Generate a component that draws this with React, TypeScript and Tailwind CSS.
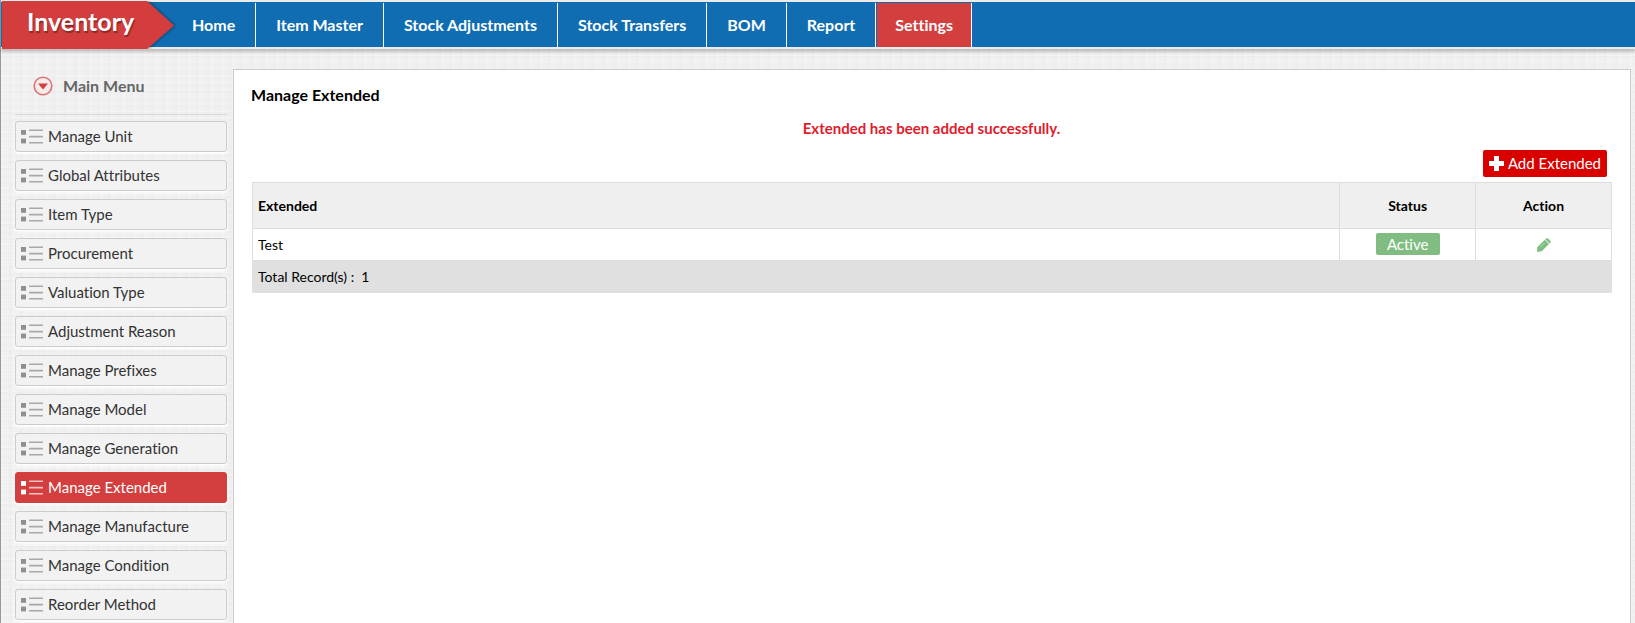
import React from "react";

const navItems = ["Home", "Item Master", "Stock Adjustments", "Stock Transfers", "BOM", "Report", "Settings"];

const menuItems = [
  "Manage Unit",
  "Global Attributes",
  "Item Type",
  "Procurement",
  "Valuation Type",
  "Adjustment Reason",
  "Manage Prefixes",
  "Manage Model",
  "Manage Generation",
  "Manage Extended",
  "Manage Manufacture",
  "Manage Condition",
  "Reorder Method",
];

function ListIcon({ active }: { active: boolean }) {
  return (
    <svg width="22" height="15" viewBox="0 0 22 15" className="shrink-0" aria-hidden="true">
      <g fill={active ? "#ffffff" : "#8f8f8f"}>
        <rect x="0" y="1" width="5" height="4.8" />
        <rect x="0" y="9.6" width="5" height="4.8" />
      </g>
      <g fill={active ? "#f3c4c4" : "#a8a8a8"}>
        <rect x="8" y="0.5" width="14" height="1.6" rx="0.5" />
        <rect x="8" y="6.8" width="14" height="1.6" rx="0.5" />
        <rect x="8" y="13" width="14" height="1.6" rx="0.5" />
      </g>
    </svg>
  );
}

function Header() {
  return (
    <header className="relative flex h-[49px] items-stretch border-t-2 border-b-2 border-[#ececec] bg-[#106db2] shadow-[0_3px_3px_rgba(0,0,0,0.2)]">
      <div className="absolute -top-px left-px">
        <svg width="184" height="48" viewBox="0 0 184 48" className="block" aria-hidden="true">
          <defs>
            <filter id="arrow-shadow" x="-10%" y="-10%" width="125%" height="125%">
              <feDropShadow dx="1" dy="0" stdDeviation="1.5" floodOpacity="0.5" />
            </filter>
          </defs>
          <path d="M0 0H145L172 24.500L145 48H0Z" fill="#d33e3e" filter="url(#arrow-shadow)" />
        </svg>
      </div>
      <a
        href="#home"
        className="relative w-[171px] pl-[26px] text-[25px] leading-[38px] font-bold text-white [text-shadow:1px_2px_1px_rgba(0,0,0,0.35)]"
      >
        Inventory
      </a>
      <nav className="flex items-stretch pt-px">
        {navItems.map((label) => (
          <a
            key={label}
            href="#"
            className={
              "flex items-center border-r border-white text-base font-bold text-white " +
              (label === "Settings" ? "ml-px bg-[#d33e3e] px-[18px]" : "px-5")
            }
          >
            {label}
          </a>
        ))}
      </nav>
    </header>
  );
}

function Sidebar() {
  return (
    <aside className="w-[212px] shrink-0">
      <h2 className="flex h-[66px] items-center gap-2.5 border-b border-[#d9d9d9] pt-2 pl-[18px] text-base font-bold text-[#666]">
        <svg width="20" height="20" viewBox="0 0 20 20" aria-hidden="true">
          <circle cx="10" cy="10" r="8.800" fill="#f6eaea" stroke="#df7272" strokeWidth="1.600" />
          <path d="M5 7.500H15L10 13.500Z" fill="#d33e3e" />
        </svg>
        Main Menu
      </h2>
      <ul className="mt-1.5 flex flex-col gap-2">
        {menuItems.map((label) => {
          const active = label === "Manage Extended";
          return (
            <li key={label}>
              <a
                href="#"
                className={
                  "flex h-[31px] items-center gap-[5px] rounded-[3px] border pl-[5px] text-[15px] shadow-[0_2px_3px_#ffffff] " +
                  (active ? "border-[#d33e3e] bg-[#d33e3e] text-white" : "border-[#cccccc] bg-[#f2f2f2] text-[#333]")
                }
              >
                <ListIcon active={active} />
                {label}
              </a>
            </li>
          );
        })}
      </ul>
    </aside>
  );
}

function RecordsTable() {
  return (
    <table className="w-full table-fixed border-collapse text-sm text-black">
      <colgroup>
        <col />
        <col className="w-[10%]" />
        <col className="w-[10%]" />
      </colgroup>
      <thead>
        <tr className="h-[46px] bg-[#efefef]">
          <th className="border border-[#dddddd] px-[5px] text-left font-bold">Extended</th>
          <th className="border border-[#dddddd] font-bold">Status</th>
          <th className="border border-[#dddddd] font-bold">Action</th>
        </tr>
      </thead>
      <tbody>
        <tr className="h-8">
          <td className="border border-[#dddddd] px-[5px]">Test</td>
          <td className="border border-[#dddddd] pb-0.5 text-center">
            <button type="button" className="inline-block h-[22px] w-16 rounded-[2px] bg-[#81bd82] align-middle text-[15px] leading-[22px] text-white">
              Active
            </button>
          </td>
          <td className="border border-[#dddddd] pb-0.5 text-center">
            <button type="button" aria-label="Edit" className="inline-block align-middle">
              <svg width="14" height="14" viewBox="0 0 14 14" className="block" aria-hidden="true">
                <path d="M0 14L0.300 9L7.800 1.800L12 6L4.700 13.300Z" fill="#81bd82" />
                <path d="M8.300 1.300L9.400 0.300Q10.200 -0.200 11 0.400L13.400 2.800Q14 3.600 13.500 4.400L12.500 5.500Z" fill="#81bd82" />
                <path d="M3.500 9L7.500 5" stroke="#b5dab6" strokeWidth="0.900" />
              </svg>
            </button>
          </td>
        </tr>
      </tbody>
      <tfoot>
        <tr className="h-8 bg-[#e0e0e0]">
          <td colSpan={3} className="border border-[#e0e0e0] px-[5px]">
            Total Record(s) : &nbsp;1
          </td>
        </tr>
      </tfoot>
    </table>
  );
}

export default function App() {
  return (
    <div className="flex min-h-screen flex-col border-l border-[#999] bg-[#f0f0f0] bg-[repeating-linear-gradient(0deg,rgba(255,255,255,0.14)_0_2px,transparent_2px_5px,rgba(0,0,0,0.006)_5px_7px),repeating-linear-gradient(90deg,rgba(255,255,255,0.14)_0_3px,transparent_3px_8px,rgba(0,0,0,0.006)_8px_11px)] font-['Lato',sans-serif] [font-variant-ligatures:none]">
      <Header />
      <div className="flex flex-1 items-stretch gap-1.5 pr-1 pl-3.5">
        <Sidebar />
        <main className="mt-5 min-w-0 flex-1 border border-b-0 border-[#cccccc] bg-white pt-[13px] pr-[18px] pl-[17px]">
          <h1 className="text-base leading-6 font-bold text-black">Manage Extended</h1>
          <p className="mt-[9px] text-center text-[15px] leading-6 font-bold text-[#e01b2c]">
            Extended has been added successfully.
          </p>
          <div className="mt-2.5 mb-[5px] flex justify-end pr-[5px]">
            <button type="button" className="flex h-[27px] items-center gap-1 rounded-[2px] bg-[#d90000] px-1.5 text-[15px] text-white">
              <svg width="15" height="15" viewBox="0 0 15 15" aria-hidden="true">
                <path d="M5 0H10V5H15V10H10V15H5V10H0V5H5Z" fill="#fff" />
              </svg>
              Add Extended
            </button>
          </div>
          <div className="pl-px">
            <RecordsTable />
          </div>
        </main>
      </div>
    </div>
  );
}
